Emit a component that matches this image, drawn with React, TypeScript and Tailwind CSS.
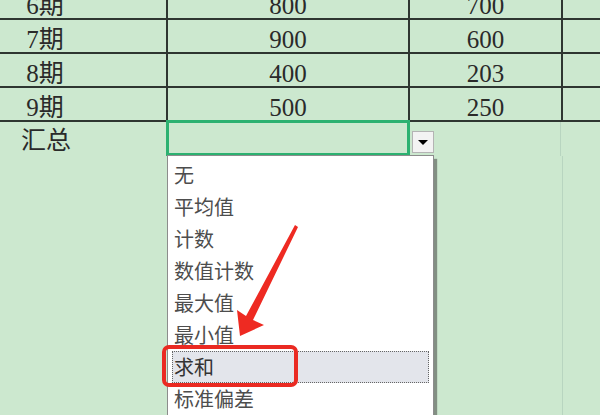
const rows = [
  { label: "6期", a: "800", b: "700" },
  { label: "7期", a: "900", b: "600" },
  { label: "8期", a: "400", b: "203" },
  { label: "9期", a: "500", b: "250" },
];

const options = ["无", "平均值", "计数", "数值计数", "最大值", "最小值", "求和", "标准偏差"];
const selected = "求和";

const cellFont = { fontFamily: '"Liberation Serif", "Noto Sans CJK SC", serif' };
const menuFont = { fontFamily: '"Noto Sans CJK SC", "Noto Sans", sans-serif' };

// ─── Summary dropdown (opened) ───────────────────────────────────────────────

function SummaryDropdown() {
  return (
    <>
      {/* arrow button */}
      <div className="absolute left-[243px] top-[8px] w-[22px] h-[22px] bg-[#f3f3f3] border border-[#b4b4b4] flex items-center justify-center">
        <span className="w-0 h-0 border-l-[5px] border-r-[5px] border-t-[5px] border-l-transparent border-r-transparent border-t-black" />
      </div>

      {/* option list */}
      <div
        className="absolute -left-[2px] top-[32px] w-[267px] h-[300px] bg-white border border-[#8c8c8c] pt-[3px] shadow-[3px_4px_1px_rgba(70,70,70,0.55)]"
        style={menuFont}
      >
        {options.map((o) => (
          <div
            key={o}
            className={
              o === selected
                ? "h-[32px] mx-[4px] pl-[1px] border border-dotted border-[#666] bg-[#e3e5eb] text-[20px] leading-[30px] text-[#333]"
                : "h-[32px] pl-[6px] text-[20px] leading-[32px] text-[#4d4d4d]"
            }
          >
            {o}
          </div>
        ))}
      </div>
    </>
  );
}

// ─── Main ────────────────────────────────────────────────────────────────────

export default function App() {
  return (
    <div className="relative w-[600px] h-[415px] overflow-hidden bg-[#cce8cf] text-[#2a2a2a]" style={cellFont}>
      <div className="flex flex-col -mt-[14px] -ml-[76px] h-[440px]">
        {/* data rows */}
        {rows.map((r) => (
          <div key={r.label} className="flex h-[34px] border-b-2 border-[#2e3631] text-[25px] leading-none">
            <div className="w-[244px] border-r-2 border-[#2e3631] flex items-center justify-center pt-[7px]">{r.label}</div>
            <div className="w-[242px] border-r-2 border-[#2e3631] flex items-center justify-center pt-[7px]">{r.a}</div>
            <div className="w-[153px] border-r-2 border-[#2e3631] flex items-center justify-center pt-[7px]">{r.b}</div>
            <div className="flex-1" />
          </div>
        ))}

        {/* total row */}
        <div className="flex h-[34px] text-[25px] leading-none">
          <div className="w-[244px] flex items-center justify-center pt-[2px]">汇总</div>
          <div className="relative -ml-[2px] -mt-[2px] w-[244px] h-[36px] border-[3px] border-[#2cb171]">
            <SummaryDropdown />
          </div>
          <div className="w-[151px] border-r border-[#b8d5c0]" />
        </div>

        {/* empty sheet area */}
        <div className="flex flex-1">
          <div className="w-[486px]" />
          <div className="w-[153px] border-r border-[#b8d5c0]" />
        </div>
      </div>

      {/* annotation */}
      <div className="absolute left-[162px] top-[345px] w-[136px] h-[42px] border-4 border-[#ea2a22] rounded-[7px]" />
      <svg className="absolute inset-0 pointer-events-none" width="600" height="415" viewBox="0 0 600 415">
        <polygon
          points="295,225 298,227 253,320 264,325 240,336 237,310 246,316"
          fill="#ee2a22"
        />
      </svg>
    </div>
  );
}
